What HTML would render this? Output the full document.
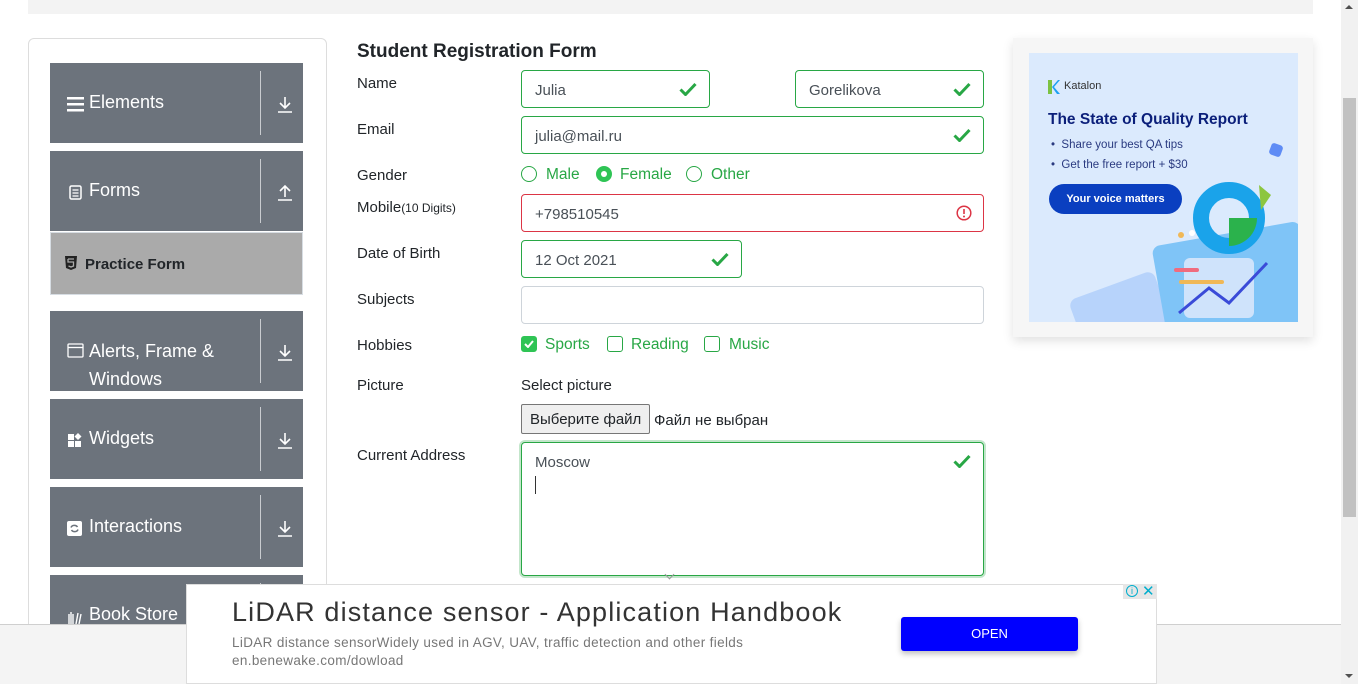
<!DOCTYPE html>
<html><head><meta charset="utf-8"><style>
*{box-sizing:border-box;margin:0;padding:0}
body{width:1358px;height:684px;overflow:hidden;background:#fff;font-family:"Liberation Sans","DejaVu Sans",sans-serif;position:relative;color:#212529}
.a{position:absolute}
.grp{position:absolute;left:50px;width:253px;height:80px;background:#6c737c;color:#fff;font-size:18px}
.grp .t{position:absolute;left:39px;top:29px;white-space:nowrap}
.grp .ic{position:absolute;left:17px;top:33px}
.grp .dv{position:absolute;left:210px;top:8px;width:1px;height:64px;background:#c9ccd0}
.grp .ar{position:absolute;left:227px;top:32px}
.lbl{position:absolute;left:357px;font-size:15px;color:#212529}
.in{position:absolute;border:1px solid #28a745;border-radius:4px;height:38px;font-size:15px;color:#495057;padding:11px 13px;background:#fff}
.ck{position:absolute;right:12px;top:11px}
.g{color:#28a745;font-size:15.5px;position:absolute}
.rad{position:absolute;width:16px;height:16px;border:1px solid #28a745;border-radius:50%;top:166px}
.cb{position:absolute;width:16px;height:16px;border:1px solid #28a745;border-radius:3px;top:336px}
</style></head><body>
<div class="a" style="left:28px;top:0;width:1285px;height:14px;background:#f3f3f3"></div>
<div class="a" style="left:28px;top:38px;width:299px;height:620px;border:1px solid #ddd;border-radius:6px"></div>

<div class="grp" style="top:63px"><svg class="ic" width="18" height="16" viewBox="0 0 18 16"><rect y="1" width="17" height="2.5" fill="#fff"/><rect y="7" width="17" height="2.5" fill="#fff"/><rect y="13" width="17" height="2.5" fill="#fff"/></svg><div class="t">Elements</div><div class="dv"></div><svg class="ar" width="16" height="18" viewBox="0 0 16 18"><path d="M8 2v11M3 8l5 5 5-5M1 17h14" stroke="#fff" stroke-width="1.6" fill="none"/></svg></div>
<div class="grp" style="top:151px"><svg class="ic" width="14" height="16" viewBox="0 0 14 16" style="left:19px;top:34px"><rect x="1" y="1" width="11" height="13" rx="1.5" fill="none" stroke="#fff" stroke-width="1.5"/><path d="M3.5 5h6M3.5 8h6M3.5 11h6" stroke="#fff" stroke-width="1.2"/></svg><div class="t">Forms</div><div class="dv"></div><svg class="ar" width="16" height="18" viewBox="0 0 16 18"><path d="M8 14V3M3 8l5-5 5 5M1 17h14" stroke="#fff" stroke-width="1.6" fill="none"/></svg></div>
<div class="a" style="left:50px;top:232px;width:253px;height:63px;background:#aaa;border:1px solid #d7dde3"></div>
<svg class="a" style="left:65px;top:256px" width="12" height="14" viewBox="0 0 12 14"><path d="M0 0h12l-1 12-5 2-5-2z" fill="#222"/><path d="M3 3h6M3 3v3h5.5v4l-2.5 1-2.5-1" stroke="#aaa" stroke-width="1.3" fill="none"/></svg>
<div class="a" style="left:85px;top:256px;font-size:15px;font-weight:bold;color:#212529">Practice Form</div>

<div class="grp" style="top:311px"><svg class="ic" width="17" height="15" viewBox="0 0 17 15" style="top:32px"><rect x="1" y="1" width="15" height="13" rx="1" fill="none" stroke="#fff" stroke-width="1.3"/><path d="M1 4.5h15" stroke="#fff" stroke-width="1.3"/></svg><div class="t" style="line-height:28px;top:26px">Alerts, Frame &amp;<br>Windows</div><div class="dv"></div><svg class="ar" width="16" height="18" viewBox="0 0 16 18"><path d="M8 2v11M3 8l5 5 5-5M1 17h14" stroke="#fff" stroke-width="1.6" fill="none"/></svg></div>
<div class="grp" style="top:399px"><svg class="ic" width="16" height="16" viewBox="0 0 16 16"><rect x="1" y="2" width="6" height="6" fill="#fff"/><rect x="1" y="9" width="6" height="6" fill="#fff"/><rect x="8" y="9" width="6" height="6" fill="#fff"/><path d="M11 1l3.5 3.5L11 8 7.5 4.5z" fill="#fff"/></svg><div class="t">Widgets</div><div class="dv"></div><svg class="ar" width="16" height="18" viewBox="0 0 16 18"><path d="M8 2v11M3 8l5 5 5-5M1 17h14" stroke="#fff" stroke-width="1.6" fill="none"/></svg></div>
<div class="grp" style="top:487px"><svg class="ic" width="15" height="15" viewBox="0 0 15 15" style="top:34px"><rect width="15" height="15" rx="2" fill="#fff"/><path d="M4 6.5a3.5 3 0 016.5-.5M11 8.5a3.5 3 0 01-6.5.5" stroke="#6c737c" stroke-width="1.5" fill="none"/></svg><div class="t">Interactions</div><div class="dv"></div><svg class="ar" width="16" height="18" viewBox="0 0 16 18"><path d="M8 2v11M3 8l5 5 5-5M1 17h14" stroke="#fff" stroke-width="1.6" fill="none"/></svg></div>
<div class="grp" style="top:575px"><svg class="ic" width="16" height="16" viewBox="0 0 16 16"><path d="M2 16V6M4 16V4M6 16V6M9 16l2-11M12 16l2-10" stroke="#fff" stroke-width="1.4"/></svg><div class="t">Book Store</div><div class="dv"></div></div>

<div class="a" style="left:357px;top:41px;font-size:19px;font-weight:bold;color:#212529">Student Registration Form</div>
<div class="lbl" style="top:75px">Name</div>
<div class="lbl" style="top:121px">Email</div>
<div class="lbl" style="top:167px">Gender</div>
<div class="lbl" style="top:199px">Mobile<span style="font-size:12px">(10 Digits)</span></div>
<div class="lbl" style="top:245px">Date of Birth</div>
<div class="lbl" style="top:291px">Subjects</div>
<div class="lbl" style="top:337px">Hobbies</div>
<div class="lbl" style="top:377px">Picture</div>
<div class="lbl" style="top:447px">Current Address</div>

<svg width="0" height="0" style="position:absolute"><defs><symbol id="ck" viewBox="0 0 18 14"><path d="M1.5 7.5l5 5L16.5 2" stroke="#28a745" stroke-width="3" fill="none"/></symbol></defs></svg>
<div class="in" style="left:521px;top:70px;width:189px">Julia<svg class="ck" width="18" height="14"><use href="#ck"/></svg></div>
<div class="in" style="left:795px;top:70px;width:189px">Gorelikova<svg class="ck" width="18" height="14"><use href="#ck"/></svg></div>
<div class="in" style="left:521px;top:116px;width:463px">julia@mail.ru<svg class="ck" width="18" height="14"><use href="#ck"/></svg></div>

<div class="rad" style="left:521px"></div><div class="g" style="left:546px;top:166px">Male</div>
<div class="rad" style="left:596px;background:#2fc455;border-color:#2fc455"><div style="position:absolute;left:4px;top:4px;width:6px;height:6px;border-radius:50%;background:#fff"></div></div><div class="g" style="left:620px;top:166px">Female</div>
<div class="rad" style="left:686px"></div><div class="g" style="left:711px;top:166px">Other</div>

<div class="in" style="left:521px;top:194px;width:463px;border-color:#dc3545">+798510545<svg style="position:absolute;right:11px;top:10px" width="16" height="16" viewBox="0 0 16 16"><circle cx="8" cy="8" r="6.8" fill="none" stroke="#dc3545" stroke-width="1.5"/><path d="M8 4v5" stroke="#dc3545" stroke-width="1.6"/><circle cx="8" cy="11.5" r="1" fill="#dc3545"/></svg></div>
<div class="in" style="left:521px;top:240px;width:221px">12 Oct 2021<svg class="ck" width="18" height="14"><use href="#ck"/></svg></div>
<div class="in" style="left:521px;top:286px;width:463px;border-color:#ced4da"></div>

<div class="cb" style="left:521px;background:#2fc455;border-color:#2fc455"><svg style="position:absolute;left:2px;top:3px" width="10" height="8" viewBox="0 0 10 8"><path d="M1 4l3 3 5-6" stroke="#fff" stroke-width="2" fill="none"/></svg></div><div class="g" style="left:545px;top:336px">Sports</div>
<div class="cb" style="left:607px"></div><div class="g" style="left:631px;top:336px">Reading</div>
<div class="cb" style="left:704px"></div><div class="g" style="left:729px;top:336px">Music</div>

<div class="a" style="left:521px;top:377px;font-size:15px">Select picture</div>
<div class="a" style="left:521px;top:404px;width:129px;height:30px;background:#efefef;border:1px solid #767676;border-radius:2px;font-size:15px;padding:6px 8px;white-space:nowrap">Выберите файл</div>
<div class="a" style="left:654px;top:412px;font-size:15px">Файл не выбран</div>

<div class="a" style="left:519px;top:440px;width:467px;height:138px;border:3px solid #c3e6cb;border-radius:6px"></div>
<div class="in" style="left:521px;top:442px;width:463px;height:134px">Moscow<div style="position:absolute;left:13px;top:33px;width:1px;height:18px;background:#333"></div><svg class="ck" width="18" height="14"><use href="#ck"/></svg></div>

<!-- Katalon ad -->
<div class="a" style="left:1013px;top:38px;width:300px;height:299px;background:#f6f6f6;box-shadow:0 4px 10px rgba(0,0,0,.12)"></div>
<div class="a" style="left:1029px;top:53px;width:269px;height:269px;background:#dbeafd;overflow:hidden">
<svg class="a" style="left:19px;top:27px" width="12" height="14" viewBox="0 0 12 14"><path d="M0 0h4v14H0z" fill="#7cc242"/><path d="M4 7l6-7h2L6 7l6 7h-3z" fill="#1da1f2"/></svg>
<div class="a" style="left:35px;top:27px;font-size:11px;color:#333">Katalon</div>
<div class="a" style="left:19px;top:58px;font-size:15.5px;font-weight:bold;color:#0b1f7a;white-space:nowrap">The State of Quality Report</div>
<div class="a" style="left:22px;top:82px;font-size:11.5px;color:#2a3a80;line-height:20px">• &nbsp;Share your best QA tips<br>• &nbsp;Get the free report + $30</div>
<div class="a" style="left:20px;top:131px;width:133px;height:30px;border-radius:15px;background:#0a3fc0;color:#fff;font-size:11px;font-weight:bold;text-align:center;line-height:30px">Your voice matters</div>
<svg class="a" style="left:0;top:120px" width="269" height="149" viewBox="0 0 269 149"><rect x="50" y="110" width="90" height="80" rx="8" fill="#b7d3fb" transform="rotate(-20 95 150)"/><rect x="130" y="60" width="150" height="100" rx="8" fill="#7fc4f7" transform="rotate(-10 205 110)"/><rect x="155" y="85" width="70" height="60" rx="6" fill="#cfe3fb"/><circle cx="200" cy="45" r="28" fill="none" stroke="#1aa3ea" stroke-width="16"/><path d="M200 45 L228 45 A28 28 0 0 1 200 73z" fill="#2bb24c"/><path d="M230 12l12 10-10 15z" fill="#8cc63f"/><path d="M150 140l30-25 20 15 38-40" stroke="#3a4bd8" stroke-width="3" fill="none"/><rect x="145" y="95" width="25" height="4" rx="2" fill="#f06b7e"/><rect x="150" y="107" width="45" height="4" rx="2" fill="#f0b857"/><circle cx="152" cy="62" r="3" fill="#f0b857"/><circle cx="163" cy="60" r="3" fill="#fff"/></svg>
<div class="a" style="left:241px;top:91px;width:12px;height:12px;border-radius:3px;background:#5f8cf5;transform:rotate(20deg)"></div>
</div>

<!-- bottom band -->
<div class="a" style="left:0;top:624px;width:1341px;height:60px;background:#f4f4f4;border-top:1px solid #cfcfcf"></div>
<!-- scrollbar -->
<div class="a" style="left:1341px;top:0;width:17px;height:684px;background:#f1f1f1"></div>
<div class="a" style="left:1343px;top:98px;width:13px;height:419px;background:#c1c1c1"></div>
<div class="a" style="left:1345px;top:5px;width:0;height:0;border-left:4px solid transparent;border-right:4px solid transparent;border-bottom:4px solid #505050"></div>
<div class="a" style="left:1345px;top:674px;width:0;height:0;border-left:4px solid transparent;border-right:4px solid transparent;border-top:4px solid #505050"></div>

<!-- bottom ad -->
<div class="a" style="left:666px;top:571px;width:7px;height:7px;border-left:1px solid #999;border-bottom:1px solid #999;transform:rotate(-45deg)"></div>
<div class="a" style="left:186px;top:584px;width:971px;height:100px;background:#fff;border:1px solid #ddd"></div>
<div class="a" style="left:1123px;top:584px;width:34px;height:15px;background:#e6e6e6"></div>
<div class="a" style="left:1126px;top:585px;width:12px;height:12px;border:1.3px solid #00aecd;border-radius:50%;color:#00aecd;font-size:9px;text-align:center;line-height:10px">i</div>
<div class="a" style="left:1142px;top:582px;color:#00aecd;font-size:15px">✕</div>
<div class="a" style="left:232px;top:597px;font-size:27px;letter-spacing:1.15px;color:#333;white-space:nowrap">LiDAR distance sensor - Application Handbook</div>
<div class="a" style="left:232px;top:635px;font-size:13.5px;letter-spacing:0.35px;color:#777;white-space:nowrap">LiDAR distance sensorWidely used in AGV, UAV, traffic detection and other fields</div>
<div class="a" style="left:232px;top:653px;font-size:13.5px;letter-spacing:0.35px;color:#777">en.benewake.com/dowload</div>
<div class="a" style="left:901px;top:617px;width:177px;height:34px;background:#0000ff;border-radius:3px;color:#fff;font-size:13px;text-align:center;line-height:34px;box-shadow:0 3px 6px rgba(0,0,0,.25)">OPEN</div>
</body></html>
